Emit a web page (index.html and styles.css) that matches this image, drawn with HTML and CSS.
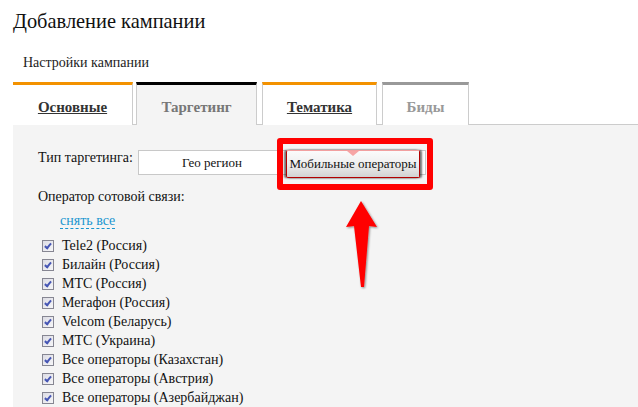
FILE: index.html
```html
<!DOCTYPE html>
<html lang="ru">
<head>
<meta charset="utf-8">
<link rel="stylesheet" href="styles.css">
</head>
<body>
<div class="page">
  <h1 class="title">Добавление кампании</h1>
  <div class="subtitle">Настройки кампании</div>
  <div class="tabs">
    <div class="tab tab-main"><span class="link">Основные</span></div>
    <div class="tab tab-active">Таргетинг</div>
    <div class="tab tab-theme"><span class="link">Тематика</span></div>
    <div class="tab tab-disabled">Биды</div>
  </div>
  <div class="panel">
    <div class="type-row">
      <span class="label">Тип таргетинга:</span>
      <div class="switch">
        <div class="opt">Гео регион</div>
        <div class="opt opt-on">Мобильные операторы<span class="notch"></span></div>
      </div>
    </div>
    <div class="op-label">Оператор сотовой связи:</div>
    <div class="toggle"><span class="dashed">снять все</span></div>
    <ul class="ops">
      <li><span class="cb"></span>Tele2 (Россия)</li>
      <li><span class="cb"></span>Билайн (Россия)</li>
      <li><span class="cb"></span>МТС (Россия)</li>
      <li><span class="cb"></span>Мегафон (Россия)</li>
      <li><span class="cb"></span>Velcom (Беларусь)</li>
      <li><span class="cb"></span>МТС (Украина)</li>
      <li><span class="cb"></span>Все операторы (Казахстан)</li>
      <li><span class="cb"></span>Все операторы (Австрия)</li>
      <li><span class="cb"></span>Все операторы (Азербайджан)</li>
    </ul>
  </div>
  <div class="highlight"></div>
  <svg class="arrow" width="40" height="95" viewBox="0 0 40 95">
    <defs>
      <filter id="sh" x="-30%" y="-30%" width="160%" height="160%">
        <feDropShadow dx="1" dy="1" stdDeviation="1" flood-color="#000" flood-opacity="0.45"/>
      </filter>
    </defs>
    <path d="M19 2 L35 28 L27 27 L22 88 L19 88 L12 27 L4 28 Z" fill="#ff0000" filter="url(#sh)"/>
  </svg>
</div>
</body>
</html>
```

FILE: styles.css
```css
html, body {
  margin: 0;
  padding: 0;
  background: #fff;
}
body {
  font-family: "Liberation Serif", "Times New Roman", serif;
  color: #111;
  font-size: 13px;
}
.page {
  position: relative;
  width: 638px;
  height: 407px;
  overflow: hidden;
  padding-left: 13px;
  box-sizing: border-box;
}
.title {
  margin: 0;
  padding-top: 9px;
  font-size: 20.4px;
  font-weight: normal;
  line-height: 24px;
  color: #111;
}
.subtitle {
  margin: 21px 0 0 10px;
  font-size: 14px;
  line-height: 18px;
  color: #222;
}
.tabs {
  display: flex;
  margin-top: 10px;
  border-bottom: 1px solid #ccc;
  height: 42px;
}
.tab {
  box-sizing: border-box;
  height: 43px;
  border-right: 1px solid #ccc;
  border-left: 1px solid #ccc;
  border-top: 3px solid #f39200;
  background: #fff;
  text-align: center;
  font-weight: bold;
  font-size: 15px;
  line-height: 18px;
  padding-top: 13px;
  color: #333;
}
.tab-main {
  width: 120px;
  border-left: none;
}
.tab-active {
  width: 121px;
  margin-left: 3px;
  border-top-color: #000;
  background: #f4f4f4;
  color: #777;
  position: relative;
  z-index: 1;
}
.tab-theme {
  width: 115px;
  margin-left: 5px;
}
.tab-disabled {
  width: 87px;
  margin-left: 5px;
  border-top-color: #999;
  color: #999;
}
.link {
  text-decoration: underline;
}
.panel {
  background: #f4f4f4;
  height: 300px;
  padding: 25px 0 0 25px;
}
.type-row {
  display: flex;
  align-items: flex-start;
}
.label {
  width: 100px;
  font-size: 14px;
  line-height: 16px;
}
.switch {
  display: flex;
  height: 25px;
  box-sizing: border-box;
  border: 1px solid #c8c8c8;
  background: #fff;
  width: 288px;
}
.opt {
  width: 146px;
  text-align: center;
  line-height: 24px;
  font-size: 13px;
}
.opt-on {
  position: relative;
  width: 134px;
  height: 28px;
  box-sizing: border-box;
  margin: -1px 0 0 1px;
  line-height: 25px;
  border: 1px solid #b20000;
  border-top-color: #f2a0a0;
  border-radius: 2px;
  background: linear-gradient(#fbfbfb 0%, #efefef 50%, #d2d2d2 100%);
  box-shadow: -2px 0 2px rgba(0,0,0,0.55), 2px 0 2px rgba(0,0,0,0.55);
}
.notch {
  position: absolute;
  left: 60px;
  top: 0;
  width: 0;
  height: 0;
  border-left: 6px solid transparent;
  border-right: 6px solid transparent;
  border-top: 5px solid #f7a5a5;
}
.op-label {
  margin-top: 13px;
  font-size: 14px;
  line-height: 18px;
}
.toggle {
  margin: 6px 0 0 22px;
  font-size: 14px;
  line-height: 18px;
}
.dashed {
  color: #1a96d0;
  border-bottom: 1px dashed #1a96d0;
}
.ops {
  list-style: none;
  margin: 6px 0 0 4px;
  padding: 0;
}
.ops li {
  display: flex;
  align-items: center;
  height: 19px;
  font-size: 14px;
}
.cb {
  width: 12px;
  height: 12px;
  box-sizing: border-box;
  border: 1px solid #868692;
  background: linear-gradient(135deg, #dcdce4, #f6f6f8);
  margin-right: 8px;
  position: relative;
  flex: none;
}
.cb::after {
  content: "";
  position: absolute;
  left: 3px;
  top: 1px;
  width: 2px;
  height: 5px;
  border: solid #4656b4;
  border-width: 0 2px 2px 0;
  transform: rotate(40deg);
}
.highlight {
  position: absolute;
  left: 277px;
  top: 138px;
  width: 156px;
  height: 52px;
  box-sizing: border-box;
  border: 6px solid #ff0000;
  border-radius: 3px;
}
.arrow {
  position: absolute;
  left: 342px;
  top: 199px;
}
```
